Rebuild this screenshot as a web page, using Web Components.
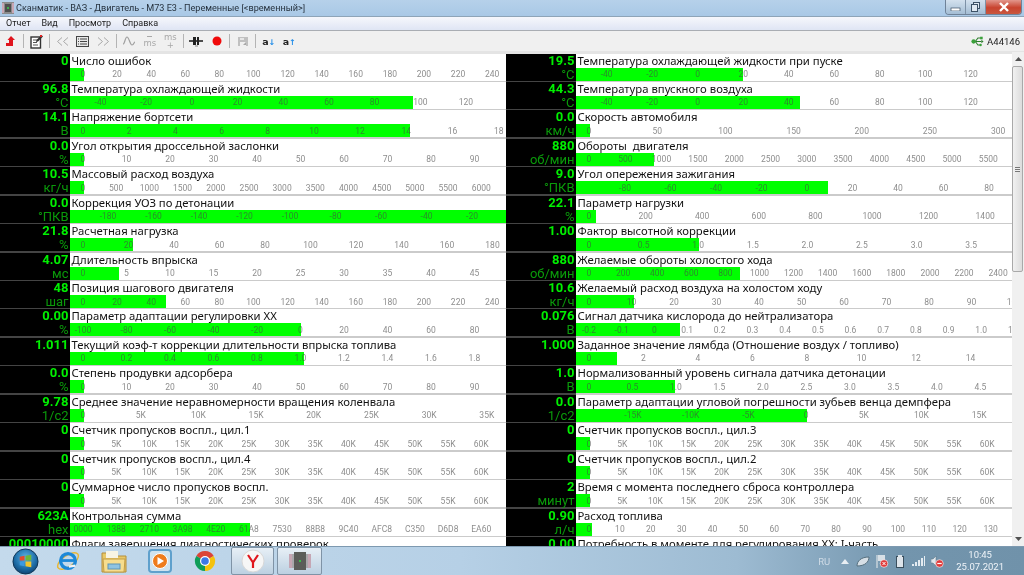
<!DOCTYPE html>
<html lang="ru">
<head>
<meta charset="utf-8">
<title>Сканматик</title>
<style>
html,body{margin:0;padding:0;width:1024px;height:575px;overflow:hidden;background:#f0f0f0}
body{display:flex;flex-direction:column;font-family:Roboto,"Noto Sans",sans-serif;filter:blur(.3px)}
</style>
</head>
<body>
<title-bar>Сканматик - ВАЗ - Двигатель - M73 E3 - Переменные [&lt;временный&gt;]</title-bar>
<menu-bar><span>Отчет</span><span>Вид</span><span>Просмотр</span><span>Справка</span></menu-bar>
<tool-bar></tool-bar>
<main-area>
<param-grid>
<param-row value="0" fill="14" first="83" pitch="34.1" ticks="0,20,40,60,80,100,120,140,160,180,200,220,240">Число ошибок</param-row>
<param-row value="96.8" unit="°C" fill="343" first="100.5" pitch="45.7" ticks="-40,-20,0,20,40,60,80,100,120">Температура охлаждающей жидкости</param-row>
<param-row value="14.1" unit="В" fill="340" first="83" pitch="46.2" ticks="0,2,4,6,8,10,12,14,16,18">Напряжение бортсети</param-row>
<param-row value="0.0" unit="%" fill="14" first="83" pitch="43.5" ticks="0,10,20,30,40,50,60,70,80,90">Угол открытия дроссельной заслонки</param-row>
<param-row value="10.5" unit="кг/ч" fill="14" first="83" pitch="33.2" ticks="0,500,1000,1500,2000,2500,3000,3500,4000,4500,5000,5500,6000">Массовый расход воздуха</param-row>
<param-row value="0.0" unit="°ПКВ" fill="436" first="108" pitch="45.5" ticks="-180,-160,-140,-120,-100,-80,-60,-40,-20">Коррекция УОЗ по детонации</param-row>
<param-row value="21.8" unit="%" fill="63" first="83" pitch="45.5" ticks="0,20,40,60,80,100,120,140,160,180">Расчетная нагрузка</param-row>
<param-row value="4.07" unit="мс" fill="49" first="83" pitch="43.5" ticks="0,5,10,15,20,25,30,35,40,45">Длительность впрыска</param-row>
<param-row value="48" unit="шаг" fill="96" first="83" pitch="34.1" ticks="0,20,40,60,80,100,120,140,160,180,200,220,240">Позиция шагового двигателя</param-row>
<param-row value="0.00" unit="%" fill="231" first="83" pitch="43.5" ticks="-100,-80,-60,-40,-20,0,20,40,60,80">Параметр адаптации регулировки ХХ</param-row>
<param-row value="1.011" fill="234" first="83" pitch="43.5" ticks="0,0.2,0.4,0.6,0.8,1.0,1.2,1.4,1.6,1.8">Текущий коэф-т коррекции длительности впрыска топлива</param-row>
<param-row value="0.0" unit="%" fill="14" first="83" pitch="43.5" ticks="0,10,20,30,40,50,60,70,80,90">Степень продувки адсорбера</param-row>
<param-row value="9.78" unit="1/с2" fill="14" first="83" pitch="57.7" ticks="0,5K,10K,15K,20K,25K,30K,35K">Среднее значение неравномерности вращения коленвала</param-row>
<param-row value="0" fill="14" first="83" pitch="33.2" ticks="0,5K,10K,15K,20K,25K,30K,35K,40K,45K,50K,55K,60K">Счетчик пропусков воспл., цил.1</param-row>
<param-row value="0" fill="14" first="83" pitch="33.2" ticks="0,5K,10K,15K,20K,25K,30K,35K,40K,45K,50K,55K,60K">Счетчик пропусков воспл., цил.4</param-row>
<param-row value="0" fill="14" first="83" pitch="33.2" ticks="0,5K,10K,15K,20K,25K,30K,35K,40K,45K,50K,55K,60K">Суммарное число пропусков воспл.</param-row>
<param-row value="623A" unit="hex" fill="180" first="83" pitch="33.2" ticks="0000,1388,2710,3A98,4E20,61A8,7530,88B8,9C40,AFC8,C350,D6D8,EA60">Контрольная сумма</param-row>
<param-row value="00010000" fill="0" first="83" pitch="33.2" ticks="">Флаги завершения диагностических проверок</param-row>

<param-row start="506" value="19.5" unit="°C" fill="167" first="606.7" pitch="45.5" ticks="-40,-20,0,20,40,60,80,100,120">Температура охлаждающей жидкости при пуске</param-row>
<param-row start="506" value="44.3" unit="°C" fill="224" first="606.7" pitch="45.5" ticks="-40,-20,0,20,40,60,80,100,120">Температура впускного воздуха</param-row>
<param-row start="506" value="0.0" unit="км/ч" fill="14" first="589" pitch="68.2" ticks="0,50,100,150,200,250,300">Скорость автомобиля</param-row>
<param-row start="506" value="880" unit="об/мин" fill="78" first="589" pitch="36.3" ticks="0,500,1000,1500,2000,2500,3000,3500,4000,4500,5000,5500">Обороты&nbsp; двигателя</param-row>
<param-row start="506" value="9.0" unit="°ПКВ" fill="252" first="625" pitch="45.5" ticks="-80,-60,-40,-20,0,20,40,60,80">Угол опережения зажигания</param-row>
<param-row start="506" value="22.1" unit="%" fill="20" first="589" pitch="56.6" ticks="0,200,400,600,800,1000,1200,1400">Параметр нагрузки</param-row>
<param-row start="506" value="1.00" fill="123" first="589" pitch="54.6" ticks="0,0.5,1.0,1.5,2.0,2.5,3.0,3.5">Фактор высотной коррекции</param-row>
<param-row start="506" value="880" unit="об/мин" fill="164" first="589" pitch="34.1" ticks="0,200,400,600,800,1000,1200,1400,1600,1800,2000,2200,2400">Желаемые обороты холостого хода</param-row>
<param-row start="506" value="10.6" unit="кг/ч" fill="58" first="589" pitch="42.5" ticks="0,10,20,30,40,50,60,70,80,90,100">Желаемый расход воздуха на холостом ходу</param-row>
<param-row start="506" value="0.076" unit="В" fill="104" first="589" pitch="32.7" ticks="-0.2,-0.1,0,0.1,0.2,0.3,0.4,0.5,0.6,0.7,0.8,0.9,1.0,1.1">Сигнал датчика кислорода до нейтрализатора</param-row>
<param-row start="506" value="1.000" fill="41" first="589" pitch="54.5" ticks="0,2,4,6,8,10,12,14">Заданное значение лямбда (Отношение воздух / топливо)</param-row>
<param-row start="506" value="1.0" unit="В" fill="99" first="589" pitch="43.5" ticks="0,0.5,1.0,1.5,2.0,2.5,3.0,3.5,4.0,4.5">Нормализованный уровень сигнала датчика детонации</param-row>
<param-row start="506" value="0.0" unit="1/с2" fill="231" first="633" pitch="57.7" ticks="-15K,-10K,-5K,0,5K,10K,15K">Параметр адаптации угловой погрешности зубьев венца демпфера</param-row>
<param-row start="506" value="0" fill="14" first="589" pitch="33.2" ticks="0,5K,10K,15K,20K,25K,30K,35K,40K,45K,50K,55K,60K">Счетчик пропусков воспл., цил.3</param-row>
<param-row start="506" value="0" fill="14" first="589" pitch="33.2" ticks="0,5K,10K,15K,20K,25K,30K,35K,40K,45K,50K,55K,60K">Счетчик пропусков воспл., цил.2</param-row>
<param-row start="506" value="2" unit="минут" fill="14" first="589" pitch="33.2" ticks="0,5K,10K,15K,20K,25K,30K,35K,40K,45K,50K,55K,60K">Время с момента последнего сброса контроллера</param-row>
<param-row start="506" value="0.90" unit="л/ч" fill="16" first="589" pitch="30.9" ticks="0,10,20,30,40,50,60,70,80,90,100,110,120,130">Расход топлива</param-row>
<param-row start="506" value="0.00" fill="0" first="589" pitch="33.2" ticks="">Потребность в моменте для регулирования ХХ: I-часть</param-row>
</param-grid>
<scroll-bar></scroll-bar>
</main-area>
<task-bar></task-bar>

<script>
const UI_FONT = 'Roboto,"Noto Sans",sans-serif'

class TitleBar extends HTMLElement{
    constructor(){
        super()
        this.attachShadow({mode:"open"}).innerHTML = `
        <style>
        :host{display:flex;align-items:center;height:17px;flex:none;background:linear-gradient(#b6d1ea,#a9c8e6);color:#26323e;font:9.1px ${UI_FONT};border-bottom:1px solid #8ea4b8;box-sizing:border-box}
        svg.logo{margin:0 2px 0 2px;flex:none}
        .txt{flex:1;white-space:nowrap;padding-bottom:1px}
        .ctl{display:flex;align-self:flex-start;margin-right:2px;height:14px;border:1px solid #6f8298;border-top:0;border-radius:0 0 4px 4px;overflow:hidden}
        .ctl div{display:flex;align-items:center;justify-content:center;width:20px;box-sizing:border-box;background:linear-gradient(#d3e1ee,#a4bdd4);border-right:1px solid #7d91a6}
        .ctl div.x{width:35px;background:linear-gradient(#e2968c,#c8432f 55%,#c9573f);border:0}
        </style>
        <svg class="logo" width="12" height="12" viewBox="0 0 12 12"><rect width="12" height="12" fill="#8b8b8b"/><rect x="0" y="1" width="2" height="10" fill="#c9a6b4"/><rect x="10" y="1" width="2" height="10" fill="#c9a6b4"/><rect x="3" y="2" width="6" height="8" fill="#4f4f4f"/><rect x="5" y="5" width="2" height="2" fill="#3fae4d"/></svg>
        <div class="txt"><slot></slot></div>
        <div class="ctl">
            <div><svg width="11" height="8"><rect x="1" y="5" width="9" height="3" fill="#fff" stroke="#3c5166" stroke-width=".7"/></svg></div>
            <div><svg width="11" height="10" fill="#dfe8f1" stroke="#3c5166" stroke-width="1"><rect x="3.5" y=".5" width="6" height="6"/><rect x="1.5" y="2.5" width="6" height="7"/></svg></div>
            <div class="x"><svg width="12" height="10" stroke="#fff" stroke-width="2.4"><path d="M2 1l8 8M10 1l-8 8"/></svg></div>
        </div>`
    }
}

class MenuBar extends HTMLElement{
    constructor(){
        super()
        this.attachShadow({mode:"open"}).innerHTML = `
        <style>
        :host{display:flex;align-items:center;gap:11px;height:14px;flex:none;padding:0 0 1px 6px;box-sizing:border-box;background:linear-gradient(#f6f7fc,#dfe5f4);color:#1c1c1c;font:9px ${UI_FONT};border-bottom:1px solid #a9adb3}
        ::slotted(span){display:block}
        </style>
        <slot></slot>`
    }
}

class ToolBar extends HTMLElement{
    constructor(){
        super()
        this.attachShadow({mode:"open"}).innerHTML = `
        <style>
        :host{display:flex;align-items:center;height:21px;box-sizing:border-box;flex:none;background:#f0f0f0;border-bottom:1px solid #e4e4e4;font:9.5px ${UI_FONT};color:#222}
        .b{display:flex;align-items:center;justify-content:center;width:20.5px;height:20px;flex:none}
        .b:first-child{margin-left:-1px}
        .s{width:1px;height:14px;background:#b4b4b4;flex:none;margin:0 2.25px}
        .right{margin-left:auto;display:flex;align-items:center;gap:3px;padding-right:4px}
        .ms{flex-direction:column;font:8.5px/8px "DejaVu Sans",sans-serif;color:#a8a8a8}
        .dash{width:5px;height:1px;background:#a8a8a8;margin-bottom:2px}
        .a{font:bold 9.5px "DejaVu Sans",sans-serif;color:#222}
        .a i{font:bold 8px "DejaVu Sans",sans-serif;color:#1b8ae8}
        </style>
        <div class="b"><svg width="9" height="10" viewBox="0 0 9 10"><path d="M0 10V7h3V4H1.500L5 0l4 4H7v6z" fill="#e0141c"/></svg></div>
        <div class="s"></div>
        <div class="b"><svg width="15" height="15" viewBox="0 0 15 15"><rect x="2" y="3" width="9.500" height="11" fill="#fff" stroke="#333" stroke-width="1.400"/><path d="M4 6h6M4 8.500h4M4 11h5" stroke="#555"/><path d="M12.500 1l1.500 1.500-5 5-2 .5.500-2z" fill="#333"/><rect x="11" y="1" width="2" height="2" fill="#d22"/></svg></div>
        <div class="s"></div>
        <div class="b"><svg width="13" height="9" fill="none" stroke="#a8a8a8"><path d="M6 .5L1.500 4.500 6 8.500M12 .5L7.500 4.500 12 8.500"/></svg></div>
        <div class="b"><svg width="13" height="11"><rect x=".5" y=".5" width="12" height="10" fill="#e8e8e8" stroke="#444"/><path d="M2 3h1M4 3h7M2 5.500h1M4 5.500h7M2 8h1M4 8h7" stroke="#444"/></svg></div>
        <div class="b"><svg width="13" height="9" fill="none" stroke="#a8a8a8"><path d="M1 .5L5.500 4.500 1 8.500M7 .5L11.500 4.500 7 8.500"/></svg></div>
        <div class="s"></div>
        <div class="b"><svg width="14" height="12" fill="none" stroke="#a0a0a0" stroke-width="1.200"><path d="M1 9C3 9 3 2 5 2s3 8 5 8 2-3 3-3"/></svg></div>
        <div class="b ms"><div class="dash"></div><div>ms</div></div>
        <div class="b ms"><div>ms</div><div>+</div></div>
        <div class="s"></div>
        <div class="b"><svg width="14" height="12"><path d="M0 6h14" stroke="#222" stroke-width="1.600"/><rect x="4" y="2" width="3" height="8" fill="#222"/><rect x="8" y="2" width="2" height="8" fill="#222"/><path d="M6 11h3" stroke="#888"/></svg></div>
        <div class="b"><svg width="10" height="10"><circle cx="5" cy="5" r="4.500" fill="#f00a0a"/></svg></div>
        <div class="s"></div>
        <div class="b"><svg width="10" height="9"><rect width="10" height="9" fill="#c0c0c0"/><rect x="2" y="5" width="6" height="4" fill="#f0f0f0"/><rect x="2" y="1" width="4" height="2" fill="#e6e6e6"/><path d="M5 8l3-3v3z" fill="#a8a8a8"/></svg></div>
        <div class="s"></div>
        <div class="b"><span class="a">a<i>↓</i></span></div>
        <div class="b"><span class="a">a<i>↑</i></span></div>
        <div class="right">
            <svg width="13" height="11" viewBox="0 0 15 12"><path d="M1 6h11M5 6l3-4h3M5 6l3 4h2" fill="none" stroke="#2c7c2c" stroke-width="1.200"/><circle cx="3" cy="6" r="2.500" fill="#3aa03a"/><rect x="10.500" y=".5" width="3" height="3" fill="#3aa03a"/><rect x="9.500" y="8.500" width="3" height="3" rx="1.500" fill="#3aa03a"/><path d="M12 4l2.500 2L12 8z" fill="#2c7c2c"/></svg>
            <span>A44146</span>
        </div>`
    }
}

class MainArea extends HTMLElement{
    constructor(){
        super()
        this.attachShadow({mode:"open"}).innerHTML = `
        <style>:host{display:flex;height:494px;flex:none;overflow:hidden;background:#fff}</style>
        <slot></slot>`
    }
}

class ParamGrid extends HTMLElement{
    constructor(){
        super()
        this.attachShadow({mode:"open"}).innerHTML = `
        <style>:host{display:grid;grid-auto-flow:column;grid-template-columns:506px 506px;grid-template-rows:repeat(18,28.44px);width:1012px;height:494px;padding-top:1.5px;box-sizing:border-box;overflow:hidden;background:#e4e4e4}</style>
        <slot></slot>`
    }
}

const rowTemplate = document.createElement("template")
rowTemplate.innerHTML = `
    <style>
    :host{display:grid;grid-template-columns:70px 436px;height:100%;min-height:0;font-family:${UI_FONT}}
    .val{display:flex;flex-direction:column;background:#000;box-sizing:border-box;padding:0 1.5px 0 0;border-bottom:2px solid #444;text-align:right}
    .num{font:bold 13px/14px Roboto,sans-serif;color:#00f000;white-space:nowrap;display:flex;justify-content:flex-end}
    .unit{font:13px/12px Roboto,sans-serif;color:#0a9a0a;margin-top:auto;white-space:nowrap}
    .body{display:flex;flex-direction:column;box-sizing:border-box;border-bottom:2px solid #cbcbcb;background:#fff}
    .name{font:11.3px/14px "Noto Sans",sans-serif;color:#111;padding-left:1.5px;white-space:nowrap;height:14px}
    .bar{display:grid;height:13px;overflow:hidden;margin-top:auto}
    .bar > *{grid-area:1/1}
    .fill{background:#00ff00;height:13px}
    .ticks{display:flex;height:13px;align-items:center;font-size:8.5px;color:rgba(70,70,70,.62)}
    .ticks span{display:flex;justify-content:center;flex:none;white-space:nowrap}
    </style>
    <div class="val"><div class="num"></div><div class="unit"></div></div>
    <div class="body">
        <div class="name"><slot></slot></div>
        <div class="bar"><div class="fill"></div><div class="ticks"></div></div>
    </div>`

class ParamRow extends HTMLElement{
    constructor(){
        super()
        const root = this.attachShadow({mode:"open"})
        root.append(rowTemplate.content.cloneNode(true))
        this._root = root
    }
    connectedCallback(){
        const root = this._root
        const left = Number(this.getAttribute("start") ?? 0) + 70
        const pitch = Number(this.getAttribute("pitch"))
        root.querySelector(".num").textContent = this.getAttribute("value") ?? ""
        root.querySelector(".unit").textContent = this.getAttribute("unit") ?? ""
        root.querySelector(".fill").style.width = (this.getAttribute("fill") ?? 0) + "px"
        const ticks = root.querySelector(".ticks")
        // first tick is the centre of its label, in page px
        ticks.style.marginLeft = (Number(this.getAttribute("first")) - left - pitch / 2) + "px"
        for (const t of (this.getAttribute("ticks") ?? "").split(",").filter(Boolean)) {
            const s = document.createElement("span")
            s.style.width = pitch + "px"
            s.textContent = t
            ticks.append(s)
        }
    }
}

class ScrollBar extends HTMLElement{
    constructor(){
        super()
        this.attachShadow({mode:"open"}).innerHTML = `
        <style>
        :host{display:flex;flex-direction:column;width:12px;flex:none;background:#f0f0f0;box-sizing:border-box}
        .arr{height:14px;display:flex;align-items:center;justify-content:center;flex:none}
        .thumb{height:206px;flex:none;background:linear-gradient(90deg,#f1f1f1,#dcdcdc);border:1px solid #a9a9a9;border-radius:2px;box-sizing:border-box;display:flex;align-items:center;justify-content:center;margin-right:1px}
        .grip{width:5px;height:5px;background:repeating-linear-gradient(#777 0 1px,#eee 1px 2px)}
        .sp{flex:1}
        </style>
        <div class="arr"><svg width="7" height="4"><path d="M0 4l3.500-4L7 4z" fill="#505050"/></svg></div>
        <div class="thumb"><div class="grip"></div></div>
        <div class="sp"></div>
        <div class="arr"><svg width="7" height="4"><path d="M0 0l3.500 4L7 0z" fill="#505050"/></svg></div>`
    }
}

class TaskBar extends HTMLElement{
    constructor(){
        super()
        this.attachShadow({mode:"open"}).innerHTML = `
        <style>
        :host{display:flex;align-items:center;height:29px;flex:none;box-sizing:border-box;border-top:1px solid #7d99b0;background:linear-gradient(90deg,#c4daec 0,#b6d0e6 45%,#9dbbd2 72%,#7395ad 88%,#7092aa 100%);font:9.5px ${UI_FONT};color:#e6eef5}
        .i{display:flex;align-items:center;justify-content:center;flex:none;height:28px}
        .btn{height:28px;flex:none;display:flex;align-items:center;justify-content:center;box-sizing:border-box;border:1px solid #7f93a6;border-radius:2px;background:linear-gradient(#e7eff6,#bcd0e1);margin-right:3px}
        .tray{margin-left:auto;margin-right:20px;display:flex;align-items:center;height:28px}
        .clock{text-align:center;line-height:12px;margin-left:12px;color:#eef3f8;white-space:nowrap}
        </style>
        <div class="i" style="width:46px;margin-left:2px"><svg width="27" height="27" viewBox="0 0 28 28"><defs><radialGradient id="o" cx=".5" cy=".35" r=".7"><stop offset="0" stop-color="#5fb4e6"/><stop offset=".6" stop-color="#1e6ea8"/><stop offset="1" stop-color="#0c3b68"/></radialGradient></defs><circle cx="14" cy="14" r="13" fill="url(#o)" stroke="#0c3252"/><path d="M8 9l5-1v5H8z" fill="#e84a2a"/><path d="M14 8l6-1v6h-6z" fill="#6cb83a"/><path d="M8 14h5v5l-5-1z" fill="#3d9ae2"/><path d="M14 14h6v6l-6-1z" fill="#f2c52e"/></svg></div>
        <div class="i" style="width:40px"><svg width="24" height="24" viewBox="0 0 26 26"><ellipse cx="13" cy="13" rx="13" ry="6" fill="none" stroke="#e8b634" stroke-width="1.600" transform="rotate(-35 13 13)"/><circle cx="13" cy="13" r="8" fill="none" stroke="#1c88d8" stroke-width="3.600"/><path d="M6 12.500h14" stroke="#1c88d8" stroke-width="3"/><path d="M14 19l7-1" stroke="#f0f4f8" stroke-width="2.500"/></svg></div>
        <div class="i" style="width:52px"><svg width="26" height="24" viewBox="0 0 26 24"><path d="M1 4h9l2 3h13v16H1z" fill="#e8c868" stroke="#b58e3a"/><rect x="5" y="2" width="12" height="7" fill="#f8f4e4"/><path d="M2 10h22l-1 13H3z" fill="#f6dd8e" stroke="#c29d46"/><rect x="7" y="15" width="12" height="5" fill="#8ec3e2" stroke="#5c95b6"/></svg></div>
        <div class="i" style="width:39px"><svg width="24" height="24" viewBox="0 0 24 24"><rect x="1" y="1" width="22" height="22" rx="3" fill="#cfe3f0" stroke="#5fa0cc" stroke-width="2"/><circle cx="12" cy="12" r="7.500" fill="#ee7c1e" stroke="#fff"/><path d="M9.500 8l6.500 4-6.500 4z" fill="#fff"/></svg></div>
        <div class="i" style="width:52px"><svg width="24" height="24" viewBox="0 0 24 24"><path d="M12 12L3.300 7A10 10 0 0 1 20.700 7z" fill="#db4437"/><path d="M12 12L20.700 7A10 10 0 0 1 12 22z" fill="#f4c20d"/><path d="M12 12V22A10 10 0 0 1 3.300 7z" fill="#0f9d58"/><circle cx="12" cy="12" r="5" fill="#fff"/><circle cx="12" cy="12" r="3.800" fill="#3b78e7"/></svg></div>
        <div class="btn" style="width:43px"><svg width="24" height="24" viewBox="0 0 24 24"><circle cx="12" cy="12" r="11" fill="#f6f6f6" stroke="#d8d8d8"/><path d="M7 6l5 7.500V19M17 6l-5 7.500" fill="none" stroke="#e0161c" stroke-width="2.200"/></svg></div>
        <div class="btn" style="width:45px"><svg width="22" height="20" viewBox="0 0 22 20"><rect y="3" width="22" height="14" fill="#a8a8ac"/><rect x="0" y="3" width="3" height="14" fill="#c5a6b4"/><rect x="19" y="3" width="3" height="14" fill="#c5a6b4"/><rect x="5" y="1" width="12" height="18" fill="#5a5d5a"/><rect x="10" y="9" width="2" height="2" fill="#38c048"/></svg></div>
        <div class="tray">
            <span style="margin-right:11px;color:#cfdbe6">RU</span>
            <svg width="8" height="5" style="margin-right:7px"><path d="M0 5l4-5 4 5z" fill="#e8eef3"/></svg>
            <svg width="14" height="11" style="margin-right:5px" viewBox="0 0 14 11"><path d="M1 10C1 5 5 1 13 1c0 5-4 9-12 9z" fill="#d6dfe6" stroke="#56707f"/></svg>
            <svg width="14" height="14" style="margin-right:7px" viewBox="0 0 14 14"><path d="M2 1v13" stroke="#eee"/><path d="M3 1h7v6H3z" fill="#d8e0e6"/><circle cx="9" cy="9.500" r="3.800" fill="#e03a3a" stroke="#fff" stroke-width=".6"/><path d="M7.500 8l3 3M10.500 8l-3 3" stroke="#fff"/></svg>
            <svg width="8" height="13" style="margin-right:8px"><rect x=".5" y="1.500" width="7" height="11" fill="#dde4ea" stroke="#3b4f5d"/><rect x="2" y="0" width="4" height="2" fill="#dde4ea"/></svg>
            <svg width="13" height="10" style="margin-right:6px" fill="#e4ebf1"><rect x="0" y="8" width="2" height="2"/><rect x="3" y="6" width="2" height="4"/><rect x="6" y="4" width="2" height="6"/><rect x="9" y="2" width="2" height="8"/><rect x="12" y="0" width="1" height="10"/></svg>
            <svg width="13" height="13" viewBox="0 0 13 13"><path d="M0 4h2l3-3v10L2 8H0z" fill="#dfe6ec" stroke="#5b7282" stroke-width=".5"/><circle cx="8.500" cy="8.500" r="3.800" fill="#e03a3a" stroke="#fff" stroke-width=".6"/><path d="M6.300 8.500h4.400" stroke="#fff" stroke-width="1.200"/></svg>
            <div class="clock">10:45<br>25.07.2021</div>
        </div>`
    }
}

customElements.define("title-bar",TitleBar)
customElements.define("menu-bar",MenuBar)
customElements.define("tool-bar",ToolBar)
customElements.define("main-area",MainArea)
customElements.define("param-grid",ParamGrid)
customElements.define("param-row",ParamRow)
customElements.define("scroll-bar",ScrollBar)
customElements.define("task-bar",TaskBar)
</script>
</body>
</html>
